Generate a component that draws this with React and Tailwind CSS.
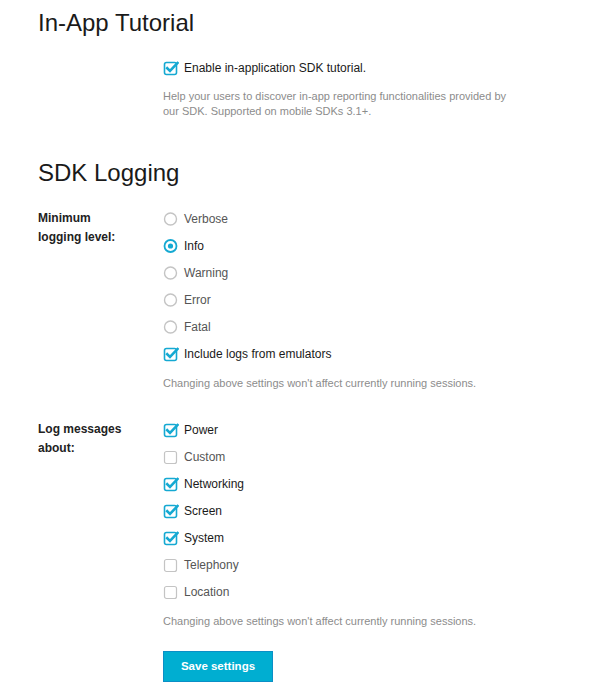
import { useState } from "react";

const BLUE = "#15a9d2";

const CheckIcon = ({ checked }) =>
  checked ? (
    <svg width="16" height="16" viewBox="0 0 16 16" className="shrink-0">
      <rect x="1.5" y="2.5" width="12" height="12" rx="2" fill="white" stroke={BLUE} strokeWidth="1.6" />
      <path d="M4.2 8.2 L7 11 L14.5 3" fill="none" stroke={BLUE} strokeWidth="2.6" strokeLinecap="square" />
    </svg>
  ) : (
    <svg width="16" height="16" viewBox="0 0 16 16" className="shrink-0">
      <rect x="1.5" y="2.5" width="12" height="12" rx="2" fill="white" stroke="#c4c4c4" strokeWidth="1.2" />
    </svg>
  );

const RadioIcon = ({ checked }) => (
  <svg width="16" height="16" viewBox="0 0 16 16" className="shrink-0">
    <circle cx="7.5" cy="8" r="6" fill="white" stroke={checked ? BLUE : "#c4c4c4"} strokeWidth={checked ? 1.8 : 1.4} />
    {checked && <circle cx="7.5" cy="8" r="2.6" fill={BLUE} />}
  </svg>
);

const Option = ({ type, label, checked, onClick }) => (
  <button
    type="button"
    onClick={onClick}
    className="flex items-center gap-[5px] h-[27px] text-left cursor-pointer"
  >
    {type === "radio" ? <RadioIcon checked={checked} /> : <CheckIcon checked={checked} />}
    <span className={`text-[12px] ${checked ? "text-[#1a1a1a]" : "text-[#555]"}`}>{label}</span>
  </button>
);

const Note = ({ children }) => (
  <p className="text-[11px] leading-[15px] text-[#8c8c8c]">{children}</p>
);

export default function App() {
  const [tutorial, setTutorial] = useState(true);
  const [level, setLevel] = useState("Info");
  const [emulators, setEmulators] = useState(true);
  const [topics, setTopics] = useState({
    Power: true,
    Custom: false,
    Networking: true,
    Screen: true,
    System: true,
    Telephony: false,
    Location: false,
  });

  return (
    <div className="w-[611px] min-h-[692px] bg-white pl-[38px] pt-[5px] font-['Liberation_Sans',Arial,sans-serif] text-[#1a1a1a]">
      <h1 className="text-[24px] leading-[36px]">In-App Tutorial</h1>

      <div className="pl-[125px] mt-[13px]">
        <Option type="check" label="Enable in-application SDK tutorial." checked={tutorial} onClick={() => setTutorial(!tutorial)} />
        <div className="mt-[8px] w-[360px]">
          <Note>Help your users to discover in-app reporting functionalities provided by our SDK. Supported on mobile SDKs 3.1+.</Note>
        </div>
      </div>

      <h1 className="text-[24px] leading-[36px] mt-[36px]">SDK Logging</h1>

      <div className="flex mt-[14px]">
        <div className="w-[125px] text-[12px] font-bold leading-[19px] text-[#222] pt-[4px]">
          Minimum<br />logging level:
        </div>
        <div className="flex flex-col">
          {["Verbose", "Info", "Warning", "Error", "Fatal"].map((l) => (
            <Option key={l} type="radio" label={l} checked={level === l} onClick={() => setLevel(l)} />
          ))}
          <Option type="check" label="Include logs from emulators" checked={emulators} onClick={() => setEmulators(!emulators)} />
          <div className="mt-[9px]">
            <Note>Changing above settings won't affect currently running sessions.</Note>
          </div>
        </div>
      </div>

      <div className="flex mt-[25px]">
        <div className="w-[125px] text-[12px] font-bold leading-[19px] text-[#222] pt-[4px]">
          Log messages<br />about:
        </div>
        <div className="flex flex-col">
          {Object.keys(topics).map((t) => (
            <Option
              key={t}
              type="check"
              label={t}
              checked={topics[t]}
              onClick={() => setTopics({ ...topics, [t]: !topics[t] })}
            />
          ))}
          <div className="mt-[9px]">
            <Note>Changing above settings won't affect currently running sessions.</Note>
          </div>
          <button
            type="button"
            className="mt-[22px] w-[110px] h-[31px] bg-[#00aed1] border border-[#0b8fc6] text-white text-[11.5px] font-bold"
          >
            Save settings
          </button>
        </div>
      </div>
    </div>
  );
}
